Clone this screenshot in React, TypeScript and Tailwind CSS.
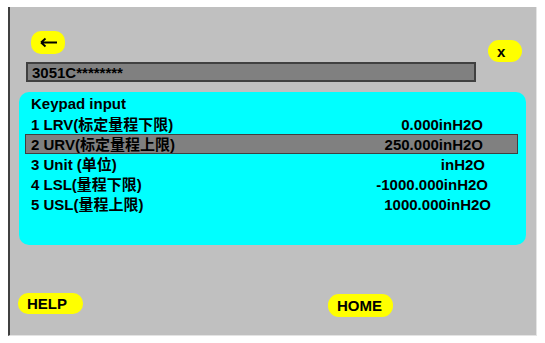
import React from "react";

const font = { fontFamily: '"Liberation Sans", Arial, "Noto Sans CJK SC", sans-serif' };

export default function App() {
  const rows: { label: string; value: string; hl?: boolean; mr: string }[] = [
    { label: "1 LRV(标定量程下限)", value: "0.000inH2O", mr: "mr-[34px]" },
    { label: "2 URV(标定量程上限)", value: "250.000inH2O", hl: true, mr: "mr-[34px]" },
    { label: "3 Unit (单位)", value: "inH2O", mr: "mr-[32px]" },
    { label: "4 LSL(量程下限)", value: "-1000.000inH2O", mr: "mr-[29px]" },
    { label: "5 USL(量程上限)", value: "1000.000inH2O", mr: "mr-[26px]" },
  ];
  return (
    <div className="w-[545px] h-[343px] bg-white pt-[7px] pl-[8px] text-black font-bold text-[15px]" style={font}>
      <div className="w-[529px] h-[329px] bg-[#c0c0c0] border-l-2 border-[#404040] border-r border-b border-r-[#e4e4e4] border-b-[#e4e4e4] flex flex-col pl-[9px] pr-[9px]">
        <div className="mt-[24px] h-[31px] flex items-start justify-between">
          <div className="ml-[12px] w-[34px] h-[23px] bg-[#ffff00] rounded-[10px] flex items-center justify-center">
            <svg width="17" height="11" viewBox="0 0 17 11">
              <path d="M1 5.5 H17 M1 5.5 L5.5 1.5 M1 5.5 L5.5 9.5" stroke="#000" strokeWidth="1.8" fill="none" />
            </svg>
          </div>
          <div className="mt-[9px] mr-[5px] w-[34px] h-[22px] bg-[#ffff00] rounded-[11px] flex items-center pl-[9px] leading-none">
            x
          </div>
        </div>
        <div className="ml-[7px] w-[450px] h-[20px] bg-[#808080] border-2 border-[#404040] flex items-center pl-[4px] leading-none">
          3051C********
        </div>
        <div className="mt-[10px] w-[507px] h-[153px] bg-[#00ffff] rounded-[10px] pt-[2px] flex flex-col">
          <div className="h-[20px] leading-[20px] pl-[12px]">Keypad input</div>
          {rows.map((r) => (
            <div
              key={r.label}
              className={`ml-[6px] mr-[8px] h-[20px] flex items-center justify-between border pl-[5px] leading-none ${
                r.hl ? "bg-[#808080] border-[#404040]" : "border-transparent"
              }`}
            >
              <span>{r.label}</span>
              <span className={r.mr}>{r.value}</span>
            </div>
          ))}
        </div>
        <div className="mt-[48px] flex items-start">
          <div className="-ml-[1px] w-[65px] h-[21px] bg-[#ffff00] rounded-[10px] flex items-center pl-[9px] leading-none">
            HELP
          </div>
          <div className="ml-[245px] mt-[1px] w-[65px] h-[23px] bg-[#ffff00] rounded-[11px] flex items-center pl-[9px] leading-none">
            HOME
          </div>
        </div>
      </div>
    </div>
  );
}
